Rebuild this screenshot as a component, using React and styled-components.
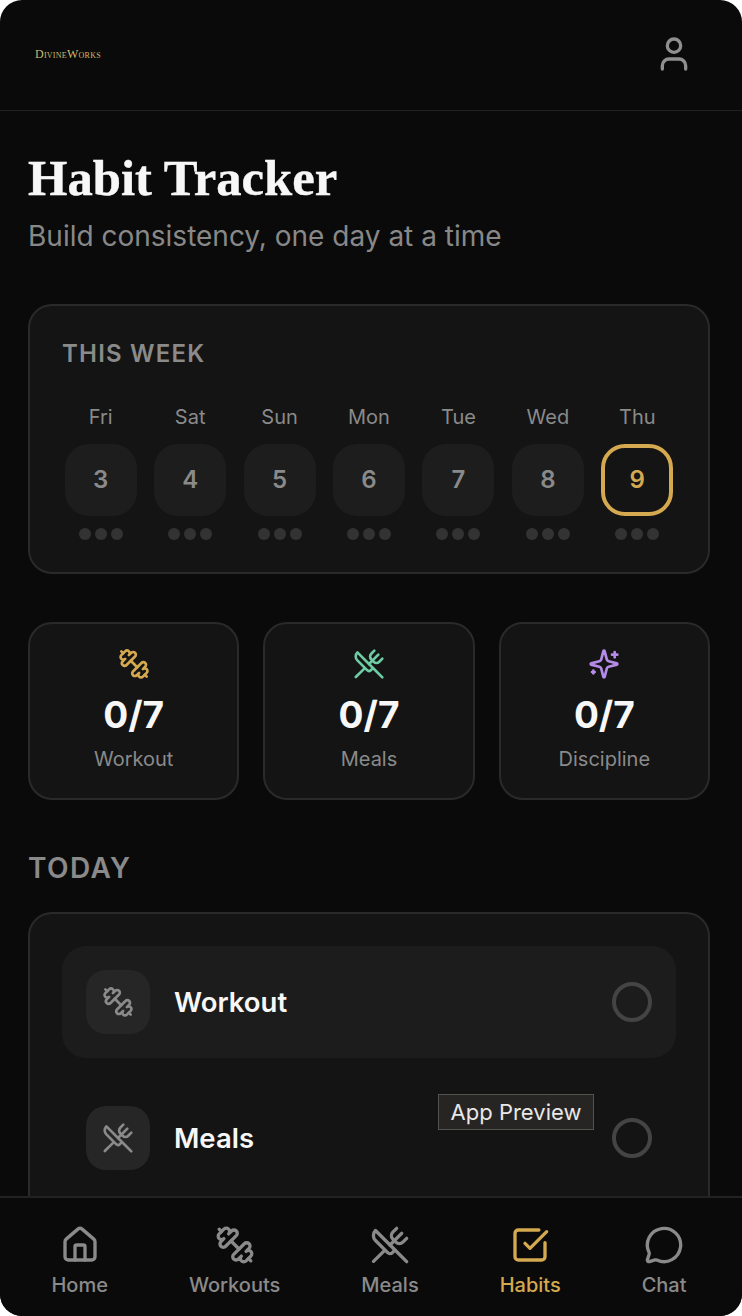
import styled, { createGlobalStyle } from "styled-components";
import { House, MessageCircle, SquareCheckBig, User, UtensilsCrossed } from "lucide-react";

const GlobalStyle = createGlobalStyle`
  html, body {
    margin: 0;
    padding: 0;
    background: #ffffff;
  }
  * {
    box-sizing: border-box;
  }
`;

const Screen = styled.div`
  position: relative;
  width: 742px;
  height: 1316px;
  display: flex;
  flex-direction: column;
  overflow: hidden;
  background: #0a0a0a;
  border-radius: 22px;
  font-family: Inter, "Liberation Sans", sans-serif;
  color: #f5f5f5;
`;

const Header = styled.header`
  flex: none;
  height: 111px;
  display: flex;
  align-items: center;
  justify-content: space-between;
  padding: 0 48px 2px 35px;
  border-bottom: 1px solid #222222;
`;

const Logo = styled.div`
  font-family: "Liberation Serif", serif;
  font-variant: small-caps;
  font-size: 12px;
  letter-spacing: 0.25px;
  color: #cdb96f;
`;

const Content = styled.main`
  flex: 1;
  min-height: 0;
  overflow: hidden;
  padding: 37px 32px 0 28px;
`;

const Title = styled.h1`
  margin: 0;
  font-family: "Liberation Serif", serif;
  font-size: 50.7px;
  font-weight: 700;
  line-height: 60px;
  color: #f7f7f7;
  -webkit-text-stroke: 0.4px #f7f7f7;
`;

const Subtitle = styled.p`
  margin: 8px 0 48px;
  font-size: 28px;
  line-height: 40px;
  color: #888888;
`;

const Card = styled.section`
  background: #141414;
  border: 2px solid #2a2a2a;
  border-radius: 24px;
  padding: 32px;
`;

const CardLabel = styled.h2`
  margin: 0;
  font-size: 24px;
  font-weight: 600;
  line-height: 32px;
  letter-spacing: 1.2px;
  color: #8a8a8a;
`;

const WeekGrid = styled.div`
  margin-top: 33px;
  display: grid;
  grid-template-columns: repeat(7, 1fr);
  column-gap: 12px;
`;

const Day = styled.div`
  display: flex;
  flex-direction: column;
  align-items: center;
`;

const DayName = styled.div`
  font-size: 20px;
  line-height: 28px;
  color: #8a8a8a;
`;

const DayTile = styled.div`
  margin-top: 13px;
  width: 72px;
  height: 72px;
  display: flex;
  align-items: center;
  justify-content: center;
  padding-bottom: 2px;
  border-radius: 24px;
  font-size: 24px;
  font-weight: 600;
  background: ${(p) => (p.$today ? "transparent" : "#1d1d1d")};
  border: ${(p) => (p.$today ? "4px solid #d4a94f" : "none")};
  color: ${(p) => (p.$today ? "#d4a94f" : "#8a8a8a")};
`;

const Dots = styled.div`
  margin-top: 12px;
  display: flex;
  gap: 4px;
`;

const Dot = styled.span`
  width: 12px;
  height: 12px;
  border-radius: 50%;
  background: #333333;
`;

const StatsRow = styled.div`
  margin-top: 48px;
  display: grid;
  grid-template-columns: repeat(3, 1fr);
  gap: 24px;
`;

const StatCard = styled.div`
  height: 178px;
  display: flex;
  flex-direction: column;
  align-items: center;
  padding: 24px 0;
  background: #141414;
  border: 2px solid #2a2a2a;
  border-radius: 24px;
  color: ${(p) => p.$accent};
`;

const StatValue = styled.div`
  margin-top: 11px;
  font-size: 37px;
  font-weight: 700;
  line-height: 48px;
  color: #f7f7f7;
`;

const StatLabel = styled.div`
  margin-top: 6px;
  font-size: 20px;
  line-height: 28px;
  color: #8a8a8a;
`;

const SectionLabel = styled.h2`
  margin: 50px 0 26px;
  font-size: 28px;
  font-weight: 600;
  line-height: 36px;
  letter-spacing: 1.4px;
  color: #8a8a8a;
`;

const HabitList = styled.div`
  display: flex;
  flex-direction: column;
  gap: 24px;
`;

const HabitRow = styled.div`
  display: flex;
  align-items: center;
  gap: 24px;
  padding: 24px;
  border-radius: 24px;
  background: ${(p) => (p.$active ? "#1c1c1c" : "transparent")};
`;

const HabitIcon = styled.div`
  flex: none;
  width: 64px;
  height: 64px;
  display: flex;
  align-items: center;
  justify-content: center;
  border-radius: 20px;
  background: #262626;
  color: #8a8a8a;
`;

const HabitName = styled.div`
  flex: 1;
  font-size: 27.5px;
  font-weight: 600;
  color: #f7f7f7;
`;

const CheckCircle = styled.div`
  flex: none;
  width: 40px;
  height: 40px;
  border-radius: 50%;
  border: 4px solid #444444;
`;

const Tooltip = styled.div`
  position: absolute;
  left: 438px;
  top: 1094px;
  width: 156px;
  height: 36px;
  display: flex;
  align-items: center;
  justify-content: center;
  background: #272523;
  border: 1px solid #555350;
  font-size: 22px;
  color: #e8e8e8;
`;

const BottomNav = styled.nav`
  flex: none;
  height: 120px;
  display: flex;
  justify-content: space-around;
  padding: 27px 15px 0 11px;
  background: #0a0a0a;
  border-top: 2px solid #222222;
`;

const NavItem = styled.div`
  display: flex;
  flex-direction: column;
  align-items: center;
  gap: 6px;
  font-size: 20px;
  font-weight: 500;
  line-height: 28px;
  color: ${(p) => (p.$active ? "#d4a94f" : "#8a8a8a")};
`;

// older lucide dumbbell, runs top-left to bottom-right with lumpy plates
const DumbbellIcon = ({ size = 32 }) => (
  <svg
    width={size}
    height={size}
    viewBox="0 0 24 24"
    fill="none"
    stroke="currentColor"
    strokeWidth="2"
    strokeLinecap="round"
    strokeLinejoin="round"
  >
    <path d="M14.4 14.4 9.6 9.6" />
    <path d="M18.657 21.485a2 2 0 1 1-2.829-2.828l-1.767 1.768a2 2 0 1 1-2.829-2.829l6.364-6.364a2 2 0 1 1 2.829 2.829l-1.768 1.767a2 2 0 1 1 2.828 2.829z" />
    <path d="m21.5 21.5-1.4-1.4" />
    <path d="M3.9 3.9 2.5 2.5" />
    <path d="M6.404 12.768a2 2 0 1 1-2.829-2.829l1.768-1.767a2 2 0 1 1-2.828-2.829l2.828-2.828a2 2 0 1 1 2.829 2.828l1.767-1.768a2 2 0 1 1 2.829 2.829z" />
  </svg>
);

const SparklesIcon = ({ size = 32 }) => (
  <svg
    width={size}
    height={size}
    viewBox="0 0 24 24"
    fill="none"
    stroke="currentColor"
    strokeWidth="2"
    strokeLinecap="round"
    strokeLinejoin="round"
  >
    <path d="M9.937 15.5A2 2 0 0 0 8.5 14.063l-6.135-1.582a.5.5 0 0 1 0-.962L8.5 9.936A2 2 0 0 0 9.937 8.5l1.582-6.135a.5.5 0 0 1 .963 0L14.063 8.5A2 2 0 0 0 15.5 9.937l6.135 1.581a.5.5 0 0 1 0 .964L15.5 14.063a2 2 0 0 0-1.437 1.437l-1.582 6.135a.5.5 0 0 1-.963 0z" />
    <path d="M20 3v4" />
    <path d="M22 5h-4" />
    <path d="M4 17v2" />
    <path d="M5 18H3" />
  </svg>
);

const week = [
  { name: "Fri", date: 3 },
  { name: "Sat", date: 4 },
  { name: "Sun", date: 5 },
  { name: "Mon", date: 6 },
  { name: "Tue", date: 7 },
  { name: "Wed", date: 8 },
  { name: "Thu", date: 9, today: true },
];

const stats = [
  { label: "Workout", Icon: DumbbellIcon, accent: "#d4a94f" },
  { label: "Meals", Icon: UtensilsCrossed, accent: "#6ecba3" },
  { label: "Discipline", Icon: SparklesIcon, accent: "#b58be8" },
];

const navItems = [
  { label: "Home", Icon: House },
  { label: "Workouts", Icon: DumbbellIcon },
  { label: "Meals", Icon: UtensilsCrossed },
  { label: "Habits", Icon: SquareCheckBig, active: true },
  { label: "Chat", Icon: MessageCircle },
];

const App = () => {
  return (
    <>
      <GlobalStyle />
      <Screen>
        <Header>
          <Logo>DivineWorks</Logo>
          <User size={40} color="#8f8f8f" strokeWidth={2} />
        </Header>

        <Content>
          <Title>Habit Tracker</Title>
          <Subtitle>Build consistency, one day at a time</Subtitle>

          <Card>
            <CardLabel>THIS WEEK</CardLabel>
            <WeekGrid>
              {week.map((day) => (
                <Day key={day.name}>
                  <DayName>{day.name}</DayName>
                  <DayTile $today={day.today}>{day.date}</DayTile>
                  <Dots>
                    <Dot />
                    <Dot />
                    <Dot />
                  </Dots>
                </Day>
              ))}
            </WeekGrid>
          </Card>

          <StatsRow>
            {stats.map(({ label, Icon, accent }) => (
              <StatCard key={label} $accent={accent}>
                <Icon size={32} />
                <StatValue>0/7</StatValue>
                <StatLabel>{label}</StatLabel>
              </StatCard>
            ))}
          </StatsRow>

          <SectionLabel>TODAY</SectionLabel>
          <Card>
            <HabitList>
              <HabitRow $active>
                <HabitIcon>
                  <DumbbellIcon size={32} />
                </HabitIcon>
                <HabitName>Workout</HabitName>
                <CheckCircle />
              </HabitRow>
              <HabitRow>
                <HabitIcon>
                  <UtensilsCrossed size={32} strokeWidth={2} />
                </HabitIcon>
                <HabitName>Meals</HabitName>
                <CheckCircle />
              </HabitRow>
            </HabitList>
          </Card>
        </Content>

        <BottomNav>
          {navItems.map(({ label, Icon, active }) => (
            <NavItem key={label} $active={active}>
              <Icon size={40} />
              {label}
            </NavItem>
          ))}
        </BottomNav>

        <Tooltip>App Preview</Tooltip>
      </Screen>
    </>
  );
};

export default App;
